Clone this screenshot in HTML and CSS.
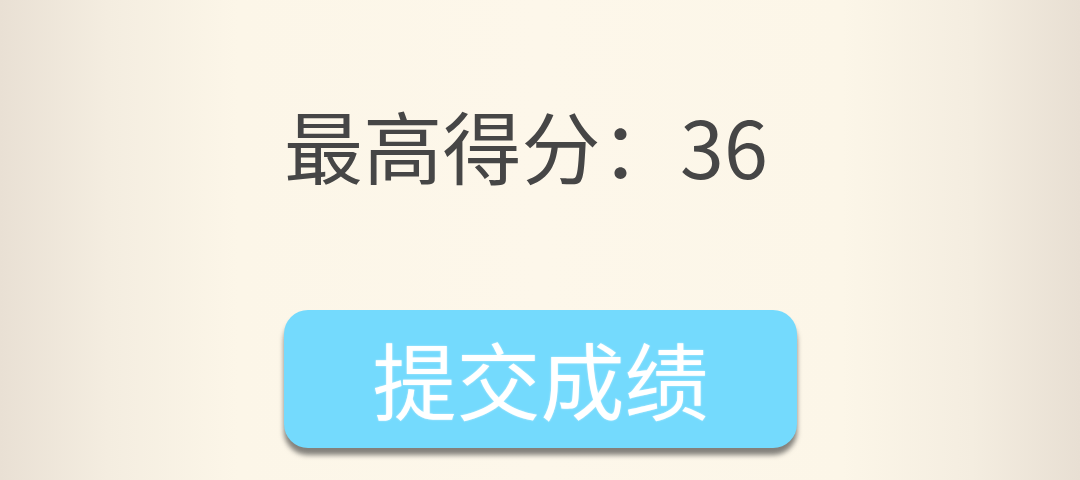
FILE: index.html
```html
<!DOCTYPE html>
<html lang="zh">
<head>
<meta charset="utf-8">
<link rel="stylesheet" href="styles.css">
</head>
<body>
<main class="page">
  <div class="score">最高得分：36</div>
  <button class="submit">提交成绩</button>
</main>
</body>
</html>
```
FILE: styles.css
```css
html, body {
  margin: 0;
  padding: 0;
  width: 1080px;
  height: 480px;
  overflow: hidden;
}
body {
  background: linear-gradient(to right, #e9e0d4 0%, #f4ede0 10%, #fcf6e8 22%, #fdf7ea 50%, #fcf6e8 78%, #f4ede0 90%, #e8dfd3 100%);
  font-family: "Noto Sans CJK SC", "Noto Sans", sans-serif;
}
.page {
  display: flex;
  flex-direction: column;
  align-items: flex-start;
  padding-left: 284px;
  padding-top: 92px;
}
.score {
  font-size: 79px;
  line-height: 106px;
  color: #464646;
  font-weight: 400;
  letter-spacing: 0.2px;
}
.submit {
  margin-top: 112px;
  width: 513px;
  height: 138px;
  border: none;
  border-radius: 24px;
  background: #74dafd;
  box-shadow: 0 7px 5px rgba(50, 50, 50, 0.6);
  color: #ffffff;
  font-family: "Noto Sans CJK SC", "Noto Sans", sans-serif;
  font-size: 84px;
  font-weight: 400;
  line-height: 1;
  padding: 0 0 2px 0;
  text-shadow: 0 0 2px rgba(255,255,255,0.6);
}
```
